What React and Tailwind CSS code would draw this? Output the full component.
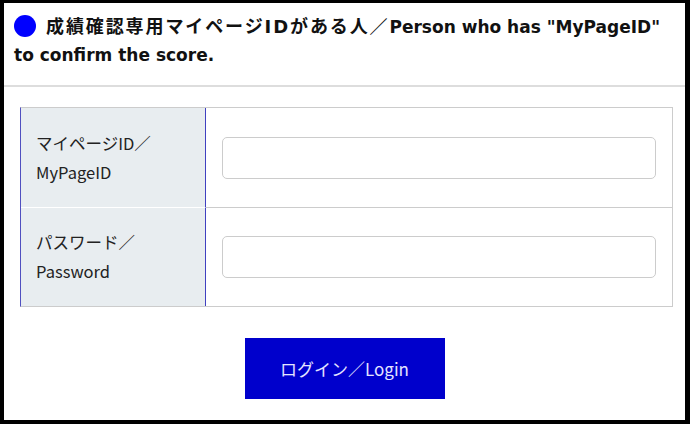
export default function App() {
  return (
    <div className="w-[690px] h-[424px] bg-black pt-[3px] pl-[4px] pr-[5px] pb-[4px]">
      <div className="w-full h-full bg-white flex flex-col">
        <div
          className="pl-[10px] pt-[10px] pr-2 text-[17px] leading-[28px] font-bold text-[#111]"
          style={{ fontFamily: '"DejaVu Sans", "Noto Sans CJK JP", sans-serif' }}
        >
          <span className="inline-block w-[22px] h-[22px] rounded-full bg-[#0000ff] align-[-4px] mr-[10px]"></span>
          <span className="text-[18px] tracking-[1.9px]">成績確認専用マイページIDがある人／</span>Person who has "MyPageID"
          <br />
          to confirm the score.
        </div>
        <div className="mt-[16px] h-[2px] bg-[#dddddd]"></div>
        <div
          className="ml-[16px] mr-[12px] mt-[20px] border border-[#cccccc] border-l-[#5050c0] flex flex-col"
          style={{ fontFamily: '"Noto Sans CJK JP", sans-serif' }}
        >
          <div className="flex h-[99px]">
            <div className="w-[185px] bg-[#e8edf0] border-r border-[#4040c0] flex items-center pl-[15px] text-[16.5px] leading-[29px] text-[#222]">
              <div>マイページID／<br />MyPageID</div>
            </div>
            <div className="flex-1 flex items-center px-[16px]">
              <input className="w-full h-[42px] border border-[#cccccc] rounded-[5px] bg-white" />
            </div>
          </div>
          <div className="flex h-[99px]">
            <div className="w-[185px] bg-[#e8edf0] border-r border-t border-t-white border-r-[#4040c0] flex items-center pl-[15px] text-[16.5px] leading-[29px] text-[#222]">
              <div>パスワード／<br />Password</div>
            </div>
            <div className="flex-1 flex items-center px-[16px] border-t border-[#cccccc]">
              <input type="password" className="w-full h-[42px] border border-[#cccccc] rounded-[5px] bg-white" />
            </div>
          </div>
        </div>
        <div className="flex justify-center mt-[31px]">
          <button
            className="w-[200px] h-[61px] bg-[#0000cc] text-[#e4e4ff] text-[17px]"
            style={{ fontFamily: '"Noto Sans CJK JP", sans-serif' }}
          >
            ログイン／Login
          </button>
        </div>
      </div>
    </div>
  );
}
